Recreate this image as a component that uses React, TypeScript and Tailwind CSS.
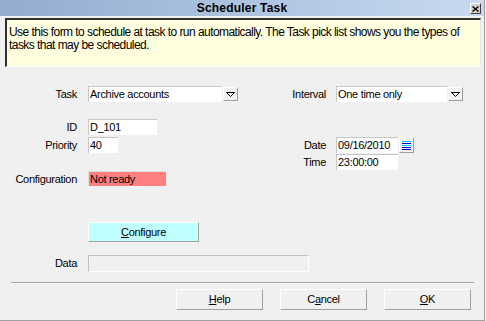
import React from "react";

const Label = ({ children, w = "w-[77px]" }: { children: React.ReactNode; w?: string }) => (
  <div className={`${w} text-right pr-0 leading-[16px]`}>{children}</div>
);

const DropBtn = () => (
  <div className="ml-[1px] mt-[1px] w-[15px] h-[14px] bg-[#f0f0f0] border-t border-l border-white border-r border-b border-r-[#a0a0a0] border-b-[#a0a0a0] flex items-center justify-center">
    <svg width="9" height="5" viewBox="0 0 9 5">
      <path d="M0.5 0.5 H8.5 L4.5 4.5 Z" fill="none" stroke="#000" strokeWidth="1" />
    </svg>
  </div>
);

export default function App() {
  return (
    <div className="w-[486px] h-[321px] bg-[#f0f0f0] font-['Liberation_Sans',Arial,sans-serif] text-[11px] text-black tracking-[-0.3px] overflow-hidden">
      <div className="w-[485px] h-[321px] border-r border-b border-[#a0a0a0] flex flex-col">
        {/* Title bar */}
        <div className="relative h-[16px] bg-gradient-to-r from-[#93acd0] to-[#c8daf0] flex items-center justify-center">
          <span className="text-[12px] font-bold tracking-[0.2px] leading-[16px]">Scheduler Task</span>
          <div className="absolute right-[3px] top-[3px] w-[11px] h-[11px] bg-[#d4d0c8] border-t border-l border-white border-r border-b border-r-[#404040] border-b-[#404040] flex items-center justify-center">
            <svg width="7" height="6" viewBox="0 0 7 6">
              <path d="M0.5 0.5 L6.5 5.5 M6.5 0.5 L0.5 5.5" stroke="#000" strokeWidth="1.4" />
            </svg>
          </div>
        </div>

        {/* Info box */}
        <div className="mt-[2px] ml-[5px] w-[476px] h-[49px] bg-[#ffffe0] border-t-2 border-l-2 border-t-[#303030] border-l-[#303030] border-r border-b border-r-[#e8e8e8] border-b-[#ffffff] pl-[2px] pt-[6px] text-[12px] leading-[13px] tracking-[-0.55px]">
          Use this form to schedule at task to run automatically. The Task pick list shows you the types of
          <br />
          tasks that may be scheduled.
        </div>

        {/* Form */}
        <div className="mt-[19px] flex">
          {/* Left column */}
          <div className="w-[250px] flex flex-col">
            <div className="flex h-[16px] items-start">
              <Label>Task</Label>
              <div className="ml-[11px] w-[134px] h-[16px] bg-white border-t border-l border-[#c8c8c8] pl-[1px] leading-[15px]">Archive accounts</div>
              <DropBtn />
            </div>
            <div className="flex h-[16px] mt-[17px]">
              <Label>ID</Label>
              <div className="ml-[11px] w-[69px] h-[16px] bg-white border-t border-l border-[#c8c8c8] pl-[1px] leading-[15px]">D_101</div>
            </div>
            <div className="flex h-[16px] mt-[2px]">
              <Label>Priority</Label>
              <div className="ml-[11px] w-[30px] h-[16px] bg-white border-t border-l border-[#c8c8c8] pl-[1px] leading-[15px]">40</div>
            </div>
            <div className="flex h-[15px] mt-[18px]">
              <Label>Configuration</Label>
              <div className="ml-[11px] w-[78px] h-[15px] bg-[#ff8080] border-t border-l border-[#e0e0e0] pl-[1px] leading-[14px]">Not ready</div>
            </div>
          </div>
          {/* Right column */}
          <div className="flex flex-col">
            <div className="flex h-[16px] items-start">
              <Label w="w-[76px]">Interval</Label>
              <div className="ml-[10px] w-[111px] h-[16px] bg-white border-t border-l border-[#c8c8c8] pl-[1px] leading-[15px]">One time only</div>
              <DropBtn />
            </div>
            <div className="flex h-[16px] mt-[35px] items-start">
              <Label w="w-[76px]">Date</Label>
              <div className="ml-[10px] w-[62px] h-[16px] bg-white border-t border-l border-[#c8c8c8] pl-[1px] leading-[15px]">09/16/2010</div>
              <div className="ml-[1px] w-[15px] h-[16px] bg-[#f0f0f0] border-t border-l border-white border-r border-b border-r-[#a0a0a0] border-b-[#a0a0a0] flex flex-col items-center justify-center">
                <div className="w-[9px] h-[1px] bg-[#00c8ff]" />
                <div className="w-[9px] h-[1px] mt-[1px] bg-[#0000c0]" />
                <div className="w-[9px] h-[1px] mt-[1px] bg-[#00c8ff]" />
                <div className="w-[9px] h-[1px] mt-[1px] bg-[#0000c0]" />
                <div className="w-[9px] h-[1px] mt-[1px] bg-[#0000c0]" />
              </div>
            </div>
            <div className="flex h-[16px] mt-[1px]">
              <Label w="w-[76px]">Time</Label>
              <div className="ml-[10px] w-[62px] h-[16px] bg-white border-t border-l border-[#c8c8c8] pl-[1px] leading-[15px]">23:00:00</div>
            </div>
          </div>
        </div>

        {/* Configure */}
        <div className="mt-[36px] ml-[88px] w-[111px] h-[20px] bg-[#c0ffff] border-t border-l border-white border-r border-b border-r-[#a0a0a0] border-b-[#a0a0a0] flex items-center justify-center leading-[14px]">
          <span><span className="underline">C</span>onfigure</span>
        </div>

        {/* Data */}
        <div className="mt-[13px] flex h-[17px]">
          <Label>Data</Label>
          <div className="ml-[11px] w-[221px] h-[17px] bg-[#f0f0f0] border-t border-l border-[#c0c0c0] border-r border-b border-r-white border-b-white" />
        </div>

        {/* Separator */}
        <div className="mt-[10px] ml-[11px] w-[463px] h-[2px] border-t border-[#a0a0a0] border-b border-b-white" />

        {/* Buttons */}
        <div className="mt-[5px] ml-[176px] flex gap-[17px]">
          {[
            <span key="h"><span className="underline">H</span>elp</span>,
            <span key="c">C<span className="underline">a</span>ncel</span>,
            <span key="o"><span className="underline">O</span>K</span>,
          ].map((t, i) => (
            <div
              key={i}
              className="w-[87px] h-[21px] bg-[#f0f0f0] border-t border-l border-white border-r border-b border-r-[#a0a0a0] border-b-[#a0a0a0] flex items-center justify-center"
            >
              {t}
            </div>
          ))}
        </div>
      </div>
    </div>
  );
}
